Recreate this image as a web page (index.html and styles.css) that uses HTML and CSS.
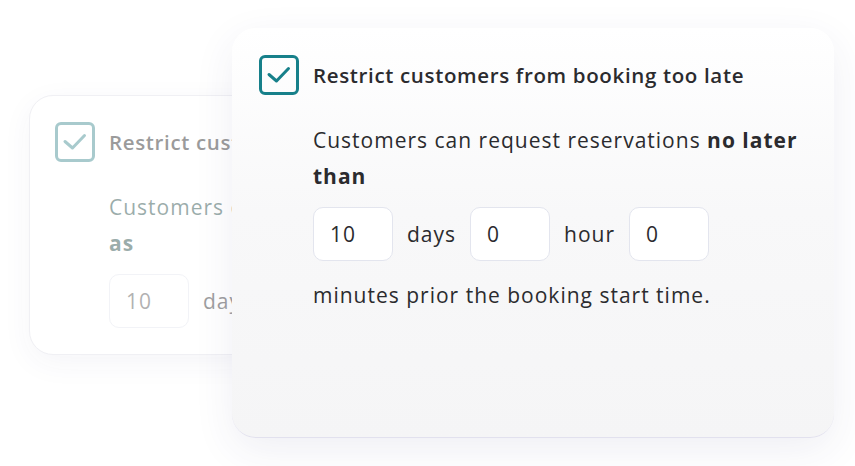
FILE: index.html
```html
<!DOCTYPE html>
<html lang="en">
<head>
  <meta charset="UTF-8">
  <meta name="viewport" content="width=device-width, initial-scale=1.0">
  <title>Booking restrictions</title>
  <link rel="stylesheet" href="styles.css">
</head>
<body>
  <div class="stage">
    <!-- faded card behind -->
    <div class="card card-back">
      <div class="card-inner">
        <div class="rule-header">
          <span class="checkbox">
            <svg viewBox="0 0 40 40" width="40" height="40"><path d="M10 19.5 L17.5 26 L29.5 13.5"/></svg>
          </span>
          <h3>Restrict customers</h3>
        </div>
        <div class="rule-body">
          <p>Customers can<br><b>as</b></p>
          <div class="fields">
            <span class="field">10</span>
            <span class="unit">days</span>
          </div>
        </div>
      </div>
    </div>

    <div class="card card-main">
      <div class="rule-header">
        <span class="checkbox">
          <svg viewBox="0 0 40 40" width="40" height="40"><path d="M10 19.5 L17.5 26 L29.5 13.5"/></svg>
        </span>
        <h3>Restrict customers from booking too late</h3>
      </div>
      <div class="rule-body">
        <p>Customers can request reservations <b>no later than</b></p>
        <div class="fields">
          <span class="field">10</span>
          <span class="unit">days</span>
          <span class="field">0</span>
          <span class="unit">hour</span>
          <span class="field">0</span>
        </div>
        <p>minutes prior the booking start time.</p>
      </div>
    </div>
  </div>
</body>
</html>
```

FILE: styles.css
```css
* {
  margin: 0;
  padding: 0;
  box-sizing: border-box;
}

:root {
  --teal: #17808a;
  --text: #2b2b2e;
  --field-border: #e3e5ee;
}

body {
  background-color: #ffffff;
  font-family: 'Open Sans', 'Liberation Sans', sans-serif;
  color: var(--text);
  width: 855px;
  height: 466px;
  overflow: hidden;
}

.stage {
  display: grid;
  grid-template-columns: 855px;
  grid-template-rows: 466px;
}

.card {
  grid-area: 1 / 1;
  border-radius: 24px;
  background-color: #fff;
}

/* only its left part shows, the main card covers the rest */
.card-back {
  margin: 95px 0 0 29px;
  width: 240px;
  height: 260px;
  overflow: hidden;
  border: 1px solid #f0f0f4;
  box-shadow: 0 8px 30px rgba(50, 50, 110, 0.05);
}

.card-back .card-inner {
  opacity: 0.45;
  padding: 26px 0 0 25px;
}

.card-main {
  position: relative;
  z-index: 1;
  margin: 28px 0 0 232px;
  width: 602px;
  height: 410px;
  padding: 27px 27px;
  background: linear-gradient(180deg, #ffffff 0%, #f8f8f9 45%, #f5f5f6 100%);
  border-bottom: 1px solid #e2e1ee;
  box-shadow: 0 12px 40px rgba(50, 50, 110, 0.08);
}

.rule-header {
  display: flex;
  align-items: center;
  gap: 14px;
}

.checkbox {
  width: 40px;
  height: 40px;
  flex-shrink: 0;
  border: 3px solid var(--teal);
  border-radius: 6px;
  display: flex;
  align-items: center;
  justify-content: center;
}

.checkbox svg {
  margin: -3px;
}

.checkbox path {
  fill: none;
  stroke: var(--teal);
  stroke-width: 3;
  stroke-linecap: round;
  stroke-linejoin: round;
}

.card-back .checkbox {
  border-color: #3e8b90;
}

.card-back .checkbox path {
  stroke: #3e8b90;
}

.rule-header h3 {
  font-size: 20.5px;
  font-weight: 600;
  letter-spacing: 0.65px;
  white-space: nowrap;
}

.card-back .rule-header h3 {
  color: #222;
}

.rule-body {
  padding-left: 54px;
  margin-top: 27px;
  font-size: 21px;
  line-height: 36px;
  letter-spacing: 1px;
}

.rule-body b {
  font-weight: 700;
}

.card-back .rule-body p {
  color: #1f4a46;
  white-space: nowrap;
}

.fields {
  display: flex;
  align-items: center;
  gap: 14px;
  margin: 13px 0 16px;
}

.field {
  width: 80px;
  height: 54px;
  border: 1.5px solid var(--field-border);
  border-radius: 10px;
  background-color: #fff;
  padding-left: 16px;
  display: flex;
  align-items: center;
  font-size: 21px;
}

.card-back .field {
  color: #555;
}
```
